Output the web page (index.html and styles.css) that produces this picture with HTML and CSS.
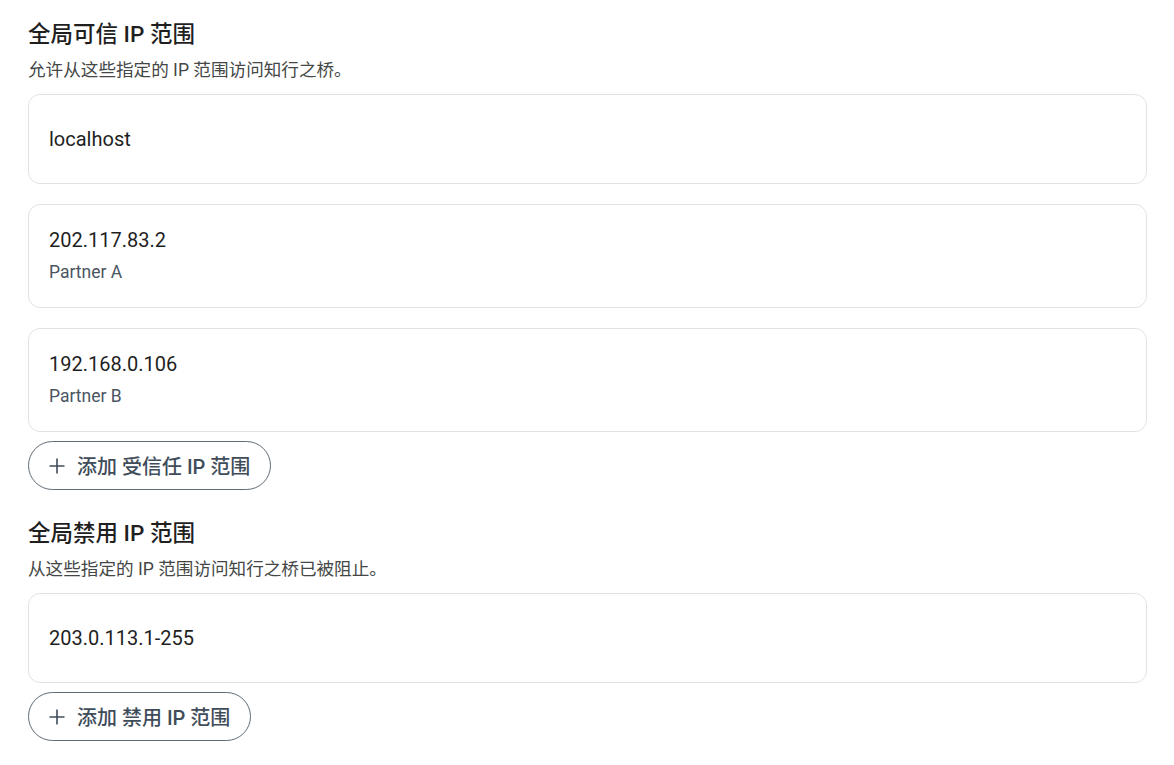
FILE: index.html
```html
<!DOCTYPE html>
<html lang="zh-CN">
<head>
  <meta charset="UTF-8">
  <meta name="viewport" content="width=device-width, initial-scale=1.0">
  <title>IP 范围</title>
  <link rel="stylesheet" href="styles.css">
</head>
<body>
  <div class="content">
    <section class="ip-section">
      <h2 class="ip-title">全局可信 IP 范围</h2>
      <p class="ip-desc">允许从这些指定的 IP 范围访问知行之桥。</p>
      <div class="ip-list">
        <div class="ip-card">
          <div class="ip-value">localhost</div>
        </div>
        <div class="ip-card">
          <div class="ip-value">202.117.83.2</div>
          <div class="ip-note">Partner A</div>
        </div>
        <div class="ip-card">
          <div class="ip-value">192.168.0.106</div>
          <div class="ip-note">Partner B</div>
        </div>
      </div>
      <button class="add-button">
        <svg class="add-icon" viewBox="0 0 18 18" width="18" height="18"><path d="M9 1.5v15M1.5 9h15" stroke="currentColor" stroke-width="1.6" fill="none"/></svg>
        添加 受信任 IP 范围
      </button>
    </section>

    <section class="ip-section">
      <h2 class="ip-title">全局禁用 IP 范围</h2>
      <p class="ip-desc">从这些指定的 IP 范围访问知行之桥已被阻止。</p>
      <div class="ip-list">
        <div class="ip-card">
          <div class="ip-value">203.0.113.1-255</div>
        </div>
      </div>
      <button class="add-button">
        <svg class="add-icon" viewBox="0 0 18 18" width="18" height="18"><path d="M9 1.5v15M1.5 9h15" stroke="currentColor" stroke-width="1.6" fill="none"/></svg>
        添加 禁用 IP 范围
      </button>
    </section>
  </div>
</body>
</html>
```

FILE: styles.css
```css
body {
  margin: 0;
  background: #fff;
  font-family: Roboto, "Noto Sans CJK SC", sans-serif;
  color: #1f1f1f;
}

.content {
  padding: 20px 27px 19px 28px;
}

.ip-section + .ip-section {
  margin-top: 29px;
}

.ip-title {
  margin: 0;
  font-size: 22.5px;
  line-height: 28px;
  font-weight: 500;
  color: #1f1f1f;
}

.ip-desc {
  margin: 10px 0 12px;
  font-size: 17.6px;
  line-height: 24px;
  color: #444746;
}

.ip-list {
  display: flex;
  flex-direction: column;
  gap: 20px;
}

.ip-card {
  min-height: 90px;
  box-sizing: border-box;
  padding: 22px 20px 23px;
  border: 1px solid #e1e3e1;
  border-radius: 12px;
  display: flex;
  flex-direction: column;
  justify-content: center;
  gap: 7px;
}

.ip-value {
  font-size: 20px;
  line-height: 26px;
  color: #1f1f1f;
}

.ip-note {
  font-size: 17.5px;
  line-height: 24px;
  color: #4a5562;
}

.add-button {
  margin-top: 9px;
  width: fit-content;
  height: 49px;
  padding: 0 20px 0 19px;
  display: flex;
  align-items: center;
  gap: 11px;
  background: transparent;
  border: 1px solid #5f6b76;
  border-radius: 25px;
  font-family: Roboto, "Noto Sans CJK SC", sans-serif;
  font-size: 20px;
  font-weight: 500;
  color: #3f4d5a;
  cursor: pointer;
}

.add-button:hover {
  background-color: #f0f4f8;
}

.add-icon {
  flex: none;
}
```
